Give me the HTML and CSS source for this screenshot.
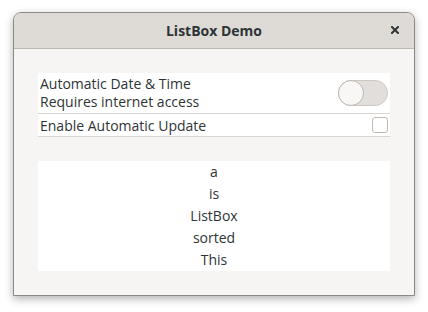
FILE: index.html
```html
<!DOCTYPE html>
<html lang="en">
<head>
    <meta charset="UTF-8">
    <title>ListBox Demo</title>
    <link rel="stylesheet" href="styles.css">
</head>
<body>
    <div class="window">
        <div class="headerbar">
            <span class="title">ListBox Demo</span>
            <svg class="close" width="8" height="8" viewBox="0 0 8 8">
                <path d="M1 1L7 7M7 1L1 7" stroke="#2e3436" stroke-width="2" stroke-linecap="square"/>
            </svg>
        </div>
        <div class="content">
            <div class="listbox">
                <div class="row row-switch">
                    <div class="labels">
                        <div>Automatic Date &amp; Time</div>
                        <div>Requires internet access</div>
                    </div>
                    <div class="switch"><div class="knob"></div></div>
                </div>
                <div class="row row-check">
                    <div>Enable Automatic Update</div>
                    <div class="check"></div>
                </div>
            </div>
            <div class="listbox sorted">
                <div class="item">a</div>
                <div class="item">is</div>
                <div class="item">ListBox</div>
                <div class="item">sorted</div>
                <div class="item">This</div>
            </div>
        </div>
    </div>
</body>
</html>
```

FILE: styles.css
```css
* {
    margin: 0;
    padding: 0;
    box-sizing: border-box;
    font-family: "Open Sans", sans-serif;
}
body {
    background: white;
    padding: 12px 13px;
}
.window {
    width: 402px;
    height: 284px;
    display: flex;
    flex-direction: column;
    background: #f6f5f4;
    border: 1px solid #8e8b87;
    border-radius: 8px 8px 0 0;
    box-shadow: 0 3px 8px rgba(0,0,0,0.3);
    overflow: hidden;
}
.headerbar {
    height: 36px;
    display: flex;
    align-items: center;
    justify-content: center;
    position: relative;
    background: #dedbd7;
    border-bottom: 1px solid #bfb8b1;
}
.title {
    font-weight: bold;
    font-size: 14px;
    color: #2e3436;
}
.close {
    position: absolute;
    right: 15px;
    top: 13px;
}
.content {
    padding: 24px;
    display: flex;
    flex-direction: column;
    gap: 24px;
}
.listbox {
    background: white;
    color: #2e3436;
    font-size: 14px;
}
.row {
    display: flex;
    align-items: center;
    justify-content: space-between;
    padding: 0 2px;
    border-bottom: 1px solid #d8d4d0;
}
.row-switch {
    height: 41px;
    line-height: 18px;
}
.row-check {
    height: 23px;
}
.switch {
    width: 50px;
    height: 26px;
    border-radius: 13px;
    background: #e1dedb;
    border: 1px solid #cdc7c2;
    position: relative;
}
.knob {
    position: absolute;
    left: -1px;
    top: -1px;
    width: 26px;
    height: 26px;
    border-radius: 50%;
    background: #f8f7f6;
    border: 1px solid #bfb8b1;
}
.check {
    width: 16px;
    height: 16px;
    border: 1px solid #bfb8b1;
    border-radius: 3px;
    background: white;
}
.sorted {
    height: 110px;
    display: flex;
    flex-direction: column;
}
.item {
    height: 22px;
    line-height: 22px;
    text-align: center;
}
```
